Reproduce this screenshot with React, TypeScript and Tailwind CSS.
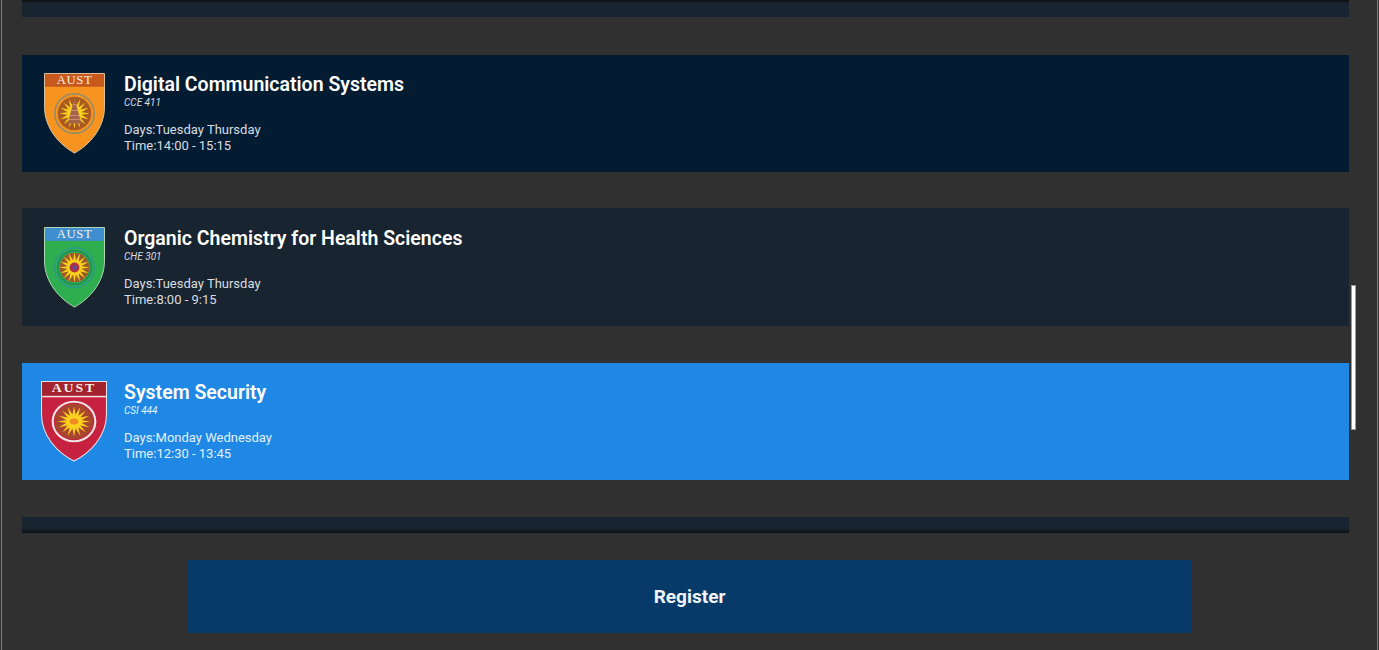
const courses = [
  {
    title: "Digital Communication Systems",
    code: "CCE 411",
    days: "Tuesday Thursday",
    time: "14:00 - 15:15",
    variant: "orange",
  },
  {
    title: "Organic Chemistry for Health Sciences",
    code: "CHE 301",
    days: "Tuesday Thursday",
    time: "8:00 - 9:15",
    variant: "green",
  },
  {
    title: "System Security",
    code: "CSI 444",
    days: "Monday Wednesday",
    time: "12:30 - 13:45",
    variant: "red",
  },
];

const crestColors: Record<string, { band: string; shield: string; edge: string; ring: string; disc: string; core: string }> = {
  orange: { band: "#c8591c", shield: "#f7941f", edge: "#d9c4a4", ring: "#8c8c72", disc: "#a85a20", core: "#a5614a" },
  green: { band: "#3f8fd0", shield: "#2fae4f", edge: "#b5d8b8", ring: "#2a9a8a", disc: "#9a5a2a", core: "#b03048" },
  red: { band: "#a3232f", shield: "#c62240", edge: "#e8e4e8", ring: "#f2e4e4", disc: "#a8452f", core: "#ee8a20" },
};

function Crest({ variant }: { variant: string }) {
  const c = crestColors[variant];
  const big = variant === "red";
  const rays = Array.from({ length: 16 }, (_, i) => (i * 360) / 16);
  return (
    <svg
      viewBox="0 0 62 82"
      preserveAspectRatio="none"
      className={big ? "w-[66px] h-[81px] shrink-0" : "w-[61px] h-[81px] shrink-0"}
    >
      <path
        d="M0.5 0.5H61.5V34C61.5 56 46 73 31 81C16 73 0.5 56 0.5 34Z"
        fill={c.shield}
        stroke={c.edge}
        strokeWidth="1"
      />
      <rect x="1" y="1" width="60" height={big ? 14 : 13} fill={c.band} />
      {big && <rect x="1" y="15" width="60" height="1.5" fill="#f0e4e4" />}
      <text
        x="31"
        y="11.5"
        textAnchor="middle"
        fontFamily="'Liberation Serif', serif"
        fontSize="13"
        letterSpacing={big ? "1.8" : "0.6"}
        fontWeight={big ? "700" : "400"}
        fill="#f6efe6"
      >
        AUST
      </text>
      <circle cx="31" cy="41" r="20" fill="none" stroke={c.ring} strokeWidth={big ? 2 : 1.5} />
      {variant === "green" && <circle cx="31" cy="41" r="17" fill="none" stroke="#1f8a5a" strokeWidth="1.5" />}
      <circle cx="31" cy="41" r={variant === "green" ? 15 : big ? 18 : 17} fill={c.disc} />
      {rays.map((a) => (
        <path key={a} d="M29.4 35L31 25.5L32.6 35Z" fill="#fbd21c" transform={`rotate(${a} 31 41)`} />
      ))}
      <circle cx="31" cy="41" r={big ? 7 : 7.5} fill="#f8d01e" />
      {variant === "orange" && (
        <>
          <path d="M31 26L38 51H24Z" fill={c.core} />
          <path d="M27 38H35M26 43H36M25 47H37M29 32H33" stroke="#d8a080" strokeWidth="0.8" />
        </>
      )}
      {variant === "green" && (
        <>
          <circle cx="31" cy="41" r="5" fill={c.core} />
          <circle cx="31" cy="41" r="2" fill="#3a5ab0" />
        </>
      )}
      {big && <ellipse cx="31" cy="41" rx="4" ry="3" fill={c.core} />}
    </svg>
  );
}

function CourseRow({ course, selected }: { course: (typeof courses)[number]; selected: boolean }) {
  const bg = selected
    ? "bg-[#1e88e4] text-[#e3f1fc]"
    : course.variant === "orange"
      ? "bg-[#041c32] text-[#d9dde1]"
      : "bg-[#18242f] text-[#d9dde1]";
  // middle row sits one pixel taller in the screenshot
  const size = course.variant === "green" ? "-mt-[1px] h-[118px] pt-[1px]" : "h-[117px]";
  return (
    <div className={`flex ${size} ${bg}`}>
      <div className="flex w-[102px] shrink-0 items-start justify-center pl-[2px] pt-[18px]">
        <Crest variant={course.variant} />
      </div>
      <div className="flex flex-col pt-[18px]">
        <h3 className="text-[19.5px] leading-[24px] font-semibold text-white">{course.title}</h3>
        <p className="text-[10px] leading-[12px] italic">{course.code}</p>
        <p className="mt-[13px] text-[13px] leading-[16px]">Days:{course.days}</p>
        <p className="text-[13px] leading-[16px]">Time:{course.time}</p>
      </div>
    </div>
  );
}

export default function App() {
  return (
    <div className="h-[650px] w-[1379px] overflow-hidden bg-[#303030] px-[1px] font-['Roboto',sans-serif]">
      <div className="relative h-full border-x border-[#8f7d45]">
        <div className="pl-[20px] pr-[28px]">
          <div className="h-[17px] bg-gradient-to-b from-[#0d0d0d] to-[#18242f] to-20%" />
          <div className="mt-[38px] flex flex-col gap-[37px]">
            {courses.map((course) => (
              <CourseRow key={course.code} course={course} selected={course.variant === "red"} />
            ))}
            <div className="h-[16px] bg-gradient-to-b from-[#18242f] from-70% to-[#0d1114]" />
          </div>
          <div className="ml-[166px] mr-[158px] mt-[27px] flex h-[73px] items-center justify-center bg-[#073a68] pt-[1px] text-[19px] font-bold text-[#f2f5f7]">
            Register
          </div>
        </div>
        <div className="absolute left-[1349px] top-[285px] h-[145px] w-[5px] border border-[#9a9a9a] bg-white" />
      </div>
    </div>
  );
}
